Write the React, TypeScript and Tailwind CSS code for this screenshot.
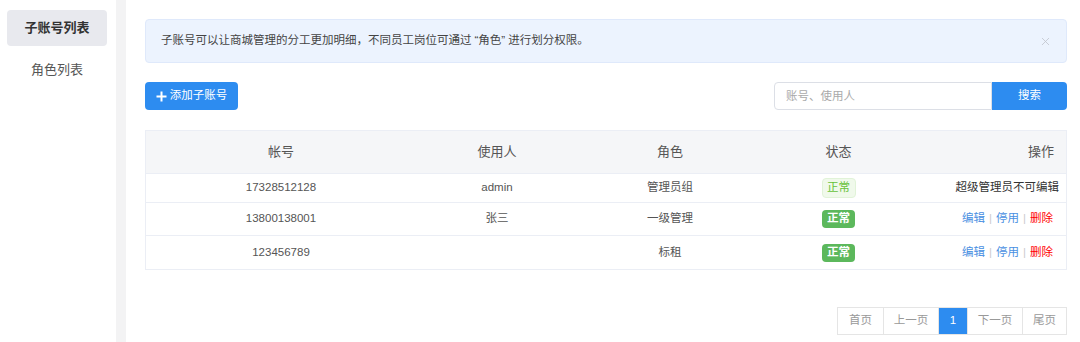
import { X } from 'lucide-react';

const ROWS = [
  { account: '17328512128', user: 'admin', role: '管理员组', light: true, h: 'h-[29px]' },
  { account: '13800138001', user: '张三', role: '一级管理', light: false, h: 'h-[33px]' },
  { account: '123456789', user: '', role: '标租', light: false, h: 'h-[33px]' },
];

const COLS = 'grid grid-cols-[270px_162px_184px_153px_1fr] items-center';

const PAGES = [
  { label: '首页', w: 'w-[45px]' },
  { label: '上一页', w: 'w-[55px]' },
  { label: '1', w: 'w-[29px]', active: true },
  { label: '下一页', w: 'w-[55px]' },
  { label: '尾页', w: 'w-[44px]' },
];

export default function App() {
  return (
    <div className="flex h-[342px] w-[1080px] bg-white font-['Liberation_Sans','Noto_Sans_CJK_SC',sans-serif] text-[#555]">
      <aside className="w-[116px] pl-[7px] pr-[9px] pt-[10px]">
        <div className="h-[36px] rounded-sm bg-[#e8e9ee] flex items-center justify-center text-[13px] font-bold text-[#333]">
          子账号列表
        </div>
        <div className="mt-[6px] h-[36px] flex items-center justify-center text-[13px] text-[#555]">
          角色列表
        </div>
      </aside>
      <div className="w-[10px] bg-[#f3f3f4]" />

      <main className="flex-1 pl-[19px] pr-[13px] pt-[19px]">
        <div className="h-[44px] rounded border border-[#dfe9fb] bg-[#ecf3fe] flex items-center justify-between pl-[15px] pr-[14px] text-[11.5px] text-[#444]">
          <span>
            子账号可以让商城管理的分工更加明细，不同员工岗位可通过
            <span className="mx-[3px]">“角色”</span>
            进行划分权限。
          </span>
          <X size={13} strokeWidth={1.5} className="text-[#c0c4cc]" />
        </div>

        <div className="mt-[19px] h-[28px] flex items-center justify-between">
          <button className="h-[28px] w-[93px] rounded bg-[#2d8cf0] text-white text-[11.5px] flex items-center justify-center gap-[3px]">
            <svg width="11" height="11" viewBox="0 0 11 11">
              <path d="M5.5 0.5v10M0.5 5.5h10" stroke="white" strokeWidth="2" />
            </svg>
            添加子账号
          </button>
          <div className="flex h-[28px]">
            <input
              placeholder="账号、使用人"
              className="w-[218px] h-[28px] border border-[#dcdfe6] rounded-l px-[11px] text-[11.5px] outline-none placeholder:text-[#aaa]"
            />
            <button className="w-[75px] h-[28px] bg-[#2d8cf0] rounded-r text-white text-[11.5px]">搜索</button>
          </div>
        </div>

        <div className="mt-[20px] border border-[#ebeef5]">
          <div className={`${COLS} h-[43px] bg-[#f5f6f8] border-b border-[#ebeef5] text-[13px] text-[#555]`}>
            <div className="text-center">帐号</div>
            <div className="text-center">使用人</div>
            <div className="text-center">角色</div>
            <div className="text-center">状态</div>
            <div className="text-right pr-[12px]">操作</div>
          </div>
          {ROWS.map((r, i) => (
            <div key={r.account} className={`${COLS} ${r.h} text-[11.5px] ${i < ROWS.length - 1 ? 'border-b border-[#ebeef5]' : ''}`}>
              <div className="text-center">{r.account}</div>
              <div className="text-center">{r.user}</div>
              <div className="text-center">{r.role}</div>
              <div className="flex justify-center">
                {r.light ? (
                  <span className="h-[20px] w-[34px] rounded-sm border border-[#e1f3d8] bg-[#f0f9eb] text-[#67c23a] flex items-center justify-center">正常</span>
                ) : (
                  <span className="h-[18px] w-[33px] rounded-sm bg-[#5cb85c] text-white font-bold flex items-center justify-center">正常</span>
                )}
              </div>
              <div className="flex justify-end items-center pr-[7px]">
                {r.light ? (
                  <span className="text-[#333]">超级管理员不可编辑</span>
                ) : (
                  <div className="flex items-center pr-[6px]">
                    <span className="text-[#4a90e2]">编辑</span>
                    <span className="mx-[4px] text-[#ccc]">|</span>
                    <span className="text-[#4a90e2]">停用</span>
                    <span className="mx-[4px] text-[#ccc]">|</span>
                    <span className="text-[#f00]">删除</span>
                  </div>
                )}
              </div>
            </div>
          ))}
        </div>

        <div className="mt-[37px] flex justify-end">
          <div className="flex h-[28px] border border-[#e5e5e5] text-[11.5px]">
            {PAGES.map((p, i) => (
              <div
                key={p.label}
                className={`${p.w} flex items-center justify-center ${i > 0 ? 'border-l border-[#e5e5e5]' : ''} ${p.active ? 'bg-[#2d8cf0] text-white' : 'text-[#999]'}`}
              >
                {p.label}
              </div>
            ))}
          </div>
        </div>
      </main>
    </div>
  );
}
